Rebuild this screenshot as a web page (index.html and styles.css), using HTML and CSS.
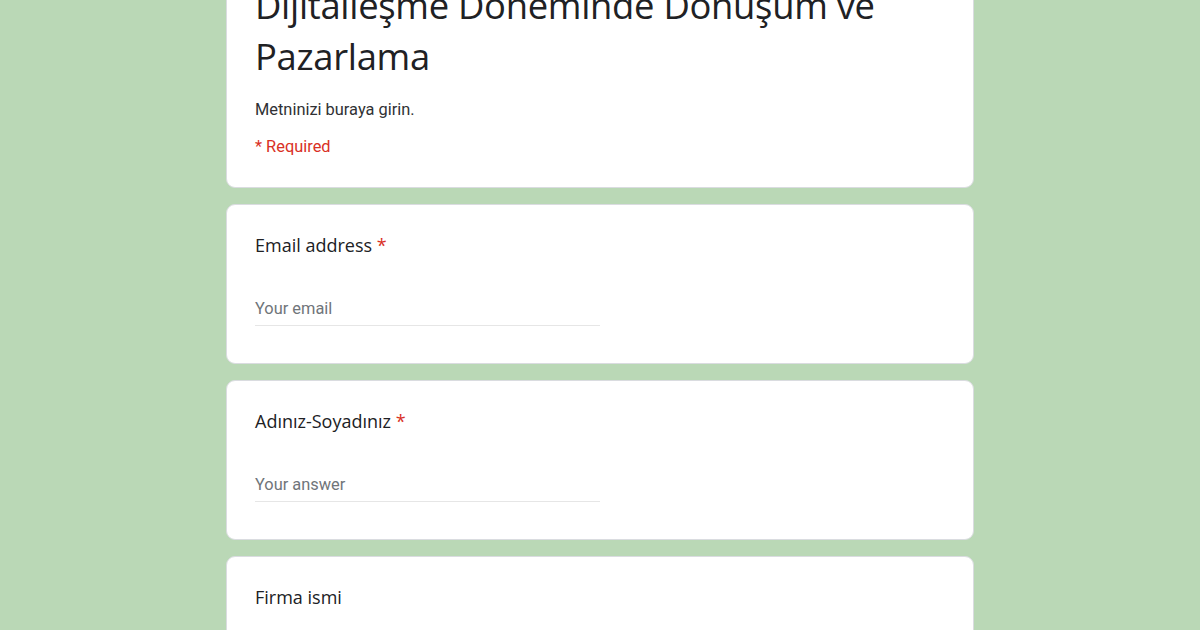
FILE: index.html
```html
<!DOCTYPE html>
<html lang="tr">
<head>
<meta charset="utf-8">
<title>Dijitalleşme Döneminde Dönüşüm ve Pazarlama</title>
<link rel="stylesheet" href="styles.css">
</head>
<body>
<main class="form">
  <section class="card header-card">
    <h1 class="title">Dijitalleşme Döneminde Dönüşüm ve Pazarlama</h1>
    <p class="desc">Metninizi buraya girin.</p>
    <p class="required-note">* Required</p>
  </section>
  <section class="card question">
    <div class="label">Email address <span class="star">*</span></div>
    <div class="answer">Your email</div>
  </section>
  <section class="card question">
    <div class="label">Adınız-Soyadınız <span class="star">*</span></div>
    <div class="answer">Your answer</div>
  </section>
  <section class="card question">
    <div class="label">Firma ismi</div>
    <div class="answer">Your answer</div>
  </section>
</main>
</body>
</html>
```

FILE: styles.css
```css
html, body {
  margin: 0;
  padding: 0;
}
body {
  background: #bad8b6;
  font-family: Roboto, "Liberation Sans", Arial, sans-serif;
  color: #202124;
  overflow: hidden;
}
.form {
  width: 748px;
  margin: -50px auto 0;
  display: flex;
  flex-direction: column;
  gap: 16px;
}
.card {
  background: #fff;
  border: 1px solid #dadce0;
  border-radius: 9px;
  padding: 28px;
  box-sizing: border-box;
}
.header-card {
  padding-top: 29px;
  padding-bottom: 29px;
}
.title {
  margin: 0;
  font-family: "Open Sans", "Liberation Sans", sans-serif;
  font-weight: 400;
  font-size: 36.4px;
  line-height: 51px;
  color: #202124;
  letter-spacing: -0.3px;
}
.desc {
  margin: 16px 0 0;
  font-size: 16.4px;
  line-height: 23px;
  color: #303134;
}
.required-note {
  margin: 14px 0 0;
  font-size: 16.4px;
  line-height: 23px;
  color: #d93025;
}
.question {
  height: 160px;
  padding-top: 26px;
}
.label {
  font-family: "Open Sans", "Liberation Sans", sans-serif;
  font-size: 18px;
  line-height: 28px;
  color: #202124;
}
.star {
  color: #d93025;
}
.answer {
  width: 50%;
  margin-top: 38px;
  font-size: 16.4px;
  line-height: 23px;
  color: #70757a;
  padding-bottom: 5px;
  border-bottom: 1.5px solid #e6e6e6;
}
```
